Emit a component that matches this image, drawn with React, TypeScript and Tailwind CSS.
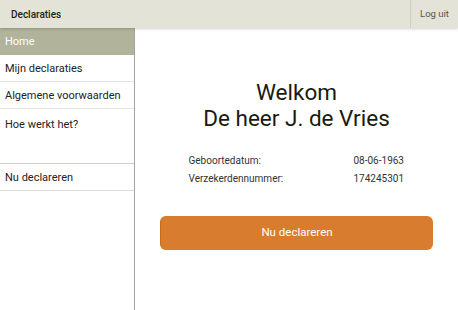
import React from 'react';

const MENU = ['Mijn declaraties', 'Algemene voorwaarden', 'Hoe werkt het?'];

export default function App() {
  return (
    <div className="w-[458px] h-[310px] flex flex-col bg-white font-['Roboto',sans-serif] overflow-hidden">
      <header className="h-[28px] flex items-center bg-[#e4e3d7] shadow-[0_1px_3px_rgba(0,0,0,0.18)] relative z-10">
        <span className="flex-1 pl-[11px] text-[10px] font-medium text-[#222]">Declaraties</span>
        <button className="h-full w-[48px] border-l border-[#d0cfc3] text-[9.5px] text-[#555]">Log uit</button>
      </header>

      <div className="flex flex-1">
        <nav className="w-[135px] border-r border-[#a3a3a3] flex flex-col">
          <div className="h-[27px] flex items-center pt-[2px] px-[5px] bg-[#b1b39b] text-[11px] text-white">Home</div>
          {MENU.map((item, i) => (
            <div
              key={item}
              className={`flex px-[5px] border-b text-[11px] text-[#222] ${
                i === MENU.length - 1
                  ? 'h-[55px] pt-[8px] items-start border-[#cfcfc8]'
                  : 'h-[27px] items-center pt-[2px] border-[#e4e4e0]'
              }`}
            >
              {item}
            </div>
          ))}
          <div className="h-[27px] flex items-center pt-[3px] px-[5px] border-b border-[#dcdcd6] text-[11px] text-[#222]">Nu declareren</div>
        </nav>

        <main className="flex-1 flex flex-col items-center pt-[51px]">
          <h1 className="text-center text-[22.5px] leading-[26px] text-[#1a1a10]">
            Welkom
            <br />
            De heer J. de Vries
          </h1>

          <div className="mt-[23px] w-[220px] ml-[4px] grid grid-cols-[165px_1fr] gap-y-[5px] text-[10px] leading-[13px] text-[#333]">
            <span>Geboortedatum:</span>
            <span>08-06-1963</span>
            <span>Verzekerdennummer:</span>
            <span>174245301</span>
          </div>

          <button className="mt-[31px] w-[273px] h-[34px] rounded-[6px] bg-[#d87d2f] border-l border-[#c96c1a] text-white text-[11.5px]">
            Nu declareren
          </button>
        </main>
      </div>
    </div>
  );
}
